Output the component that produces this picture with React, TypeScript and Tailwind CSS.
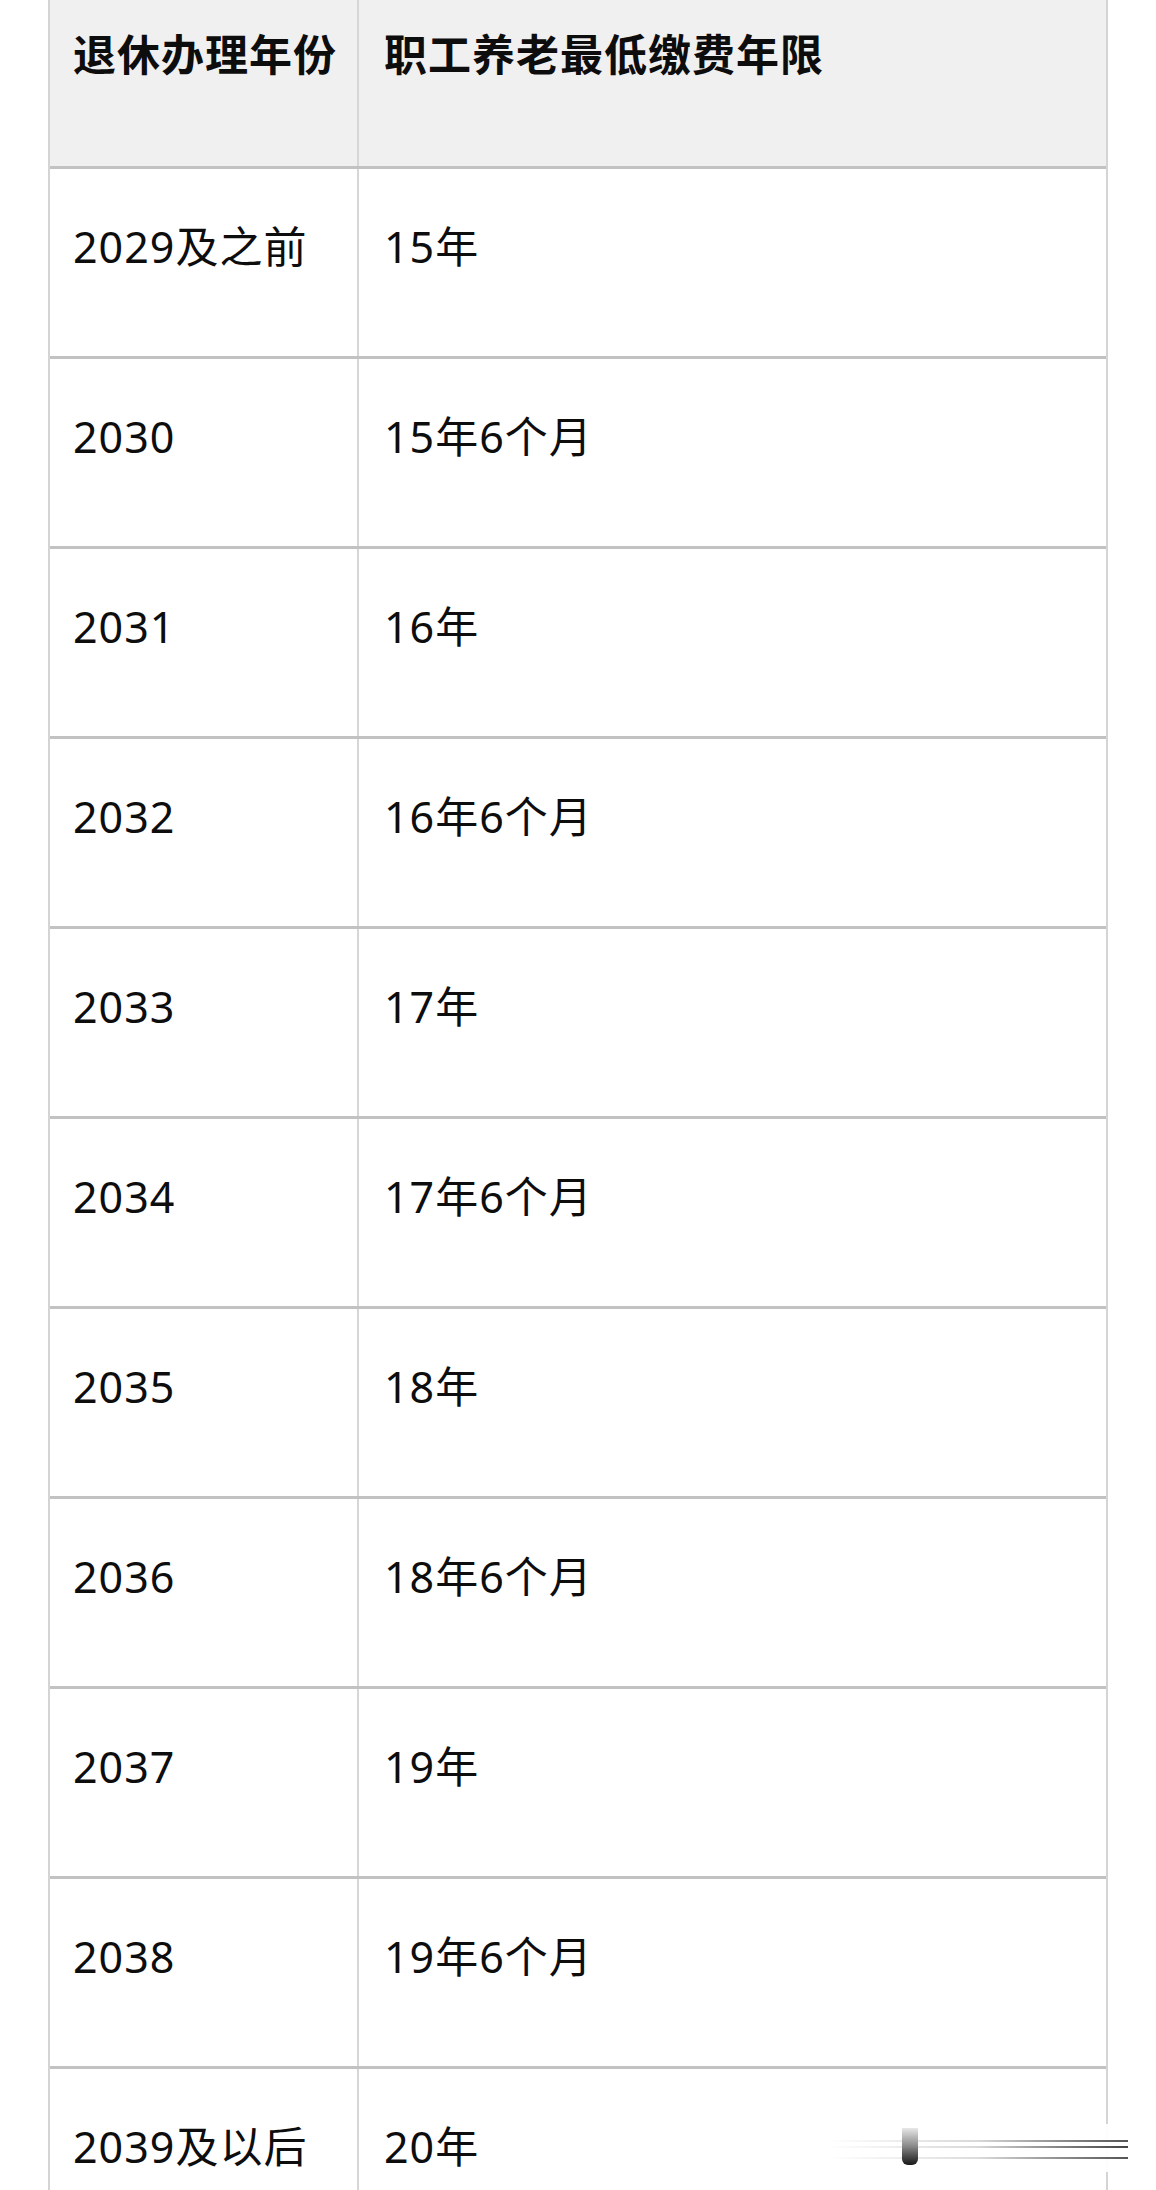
import React from 'react'

const rows = [
  { year: '2029及之前', span: '15年' },
  { year: '2030', span: '15年6个月' },
  { year: '2031', span: '16年' },
  { year: '2032', span: '16年6个月' },
  { year: '2033', span: '17年' },
  { year: '2034', span: '17年6个月' },
  { year: '2035', span: '18年' },
  { year: '2036', span: '18年6个月' },
  { year: '2037', span: '19年' },
  { year: '2038', span: '19年6个月' },
  { year: '2039及以后', span: '20年' },
]

// blurred share badge sitting over the bottom-right corner of the table
function Watermark() {
  return (
    <div className="absolute left-[822px] top-[2124px] h-[48px] w-[334px] bg-gradient-to-r from-white/0 via-white/95 to-white/95">
      <div className="flex flex-col pl-[6px] pt-[16px]">
        <div className="h-[2px] w-[300px] bg-gradient-to-r from-white/0 via-[#d8d8d8] to-[#555]" />
        <div className="mt-[4px] h-[2px] w-[300px] bg-gradient-to-r from-white/0 via-[#d8d8d8] to-[#444]" />
        <div className="mt-[9px] h-[2px] w-[300px] bg-gradient-to-r from-white/0 via-[#dcdcdc] to-[#555]" />
      </div>
      <div className="absolute left-[80px] top-[4px] h-[37px] w-[16px] rounded-b-[6px] bg-gradient-to-b from-[#e8e8e8] via-[#888] to-[#1a1a1a]" />
    </div>
  )
}

export default function App() {
  return (
    <div
      className="relative h-[2190px] w-[1156px] overflow-hidden bg-white text-[#0d0d0d]"
      style={{ fontFamily: '"Noto Sans", "Noto Sans CJK SC", sans-serif' }}
    >
      <div className="ml-[48px] w-[1060px] border-x-2 border-[#d4d4d4]">
        {/* Header */}
        <div className="flex h-[169px] border-b-[3px] border-[#c2c2c2] bg-[#f0f0f0]">
          <div className="w-[309px] shrink-0 border-r-2 border-[#d6d6d6] pl-[23px] pt-[25px] text-[43px] font-bold leading-[60px] tracking-[1px]">
            退休办理年份
          </div>
          <div className="flex-1 pl-[25px] pt-[25px] text-[43px] font-bold leading-[60px] tracking-[1px]">
            职工养老最低缴费年限
          </div>
        </div>

        {/* Body */}
        {rows.map((row) => (
          <div key={row.year} className="flex h-[190px] border-b-[3px] border-[#c2c2c2]">
            <div className="w-[309px] shrink-0 border-r-2 border-[#d6d6d6] pl-[23px] pt-[48px] text-[43px] leading-[60px] tracking-[1px]">
              {row.year}
            </div>
            <div className="flex-1 pl-[25px] pt-[48px] text-[43px] leading-[60px] tracking-[1px]">{row.span}</div>
          </div>
        ))}
      </div>

      <Watermark />
    </div>
  )
}
